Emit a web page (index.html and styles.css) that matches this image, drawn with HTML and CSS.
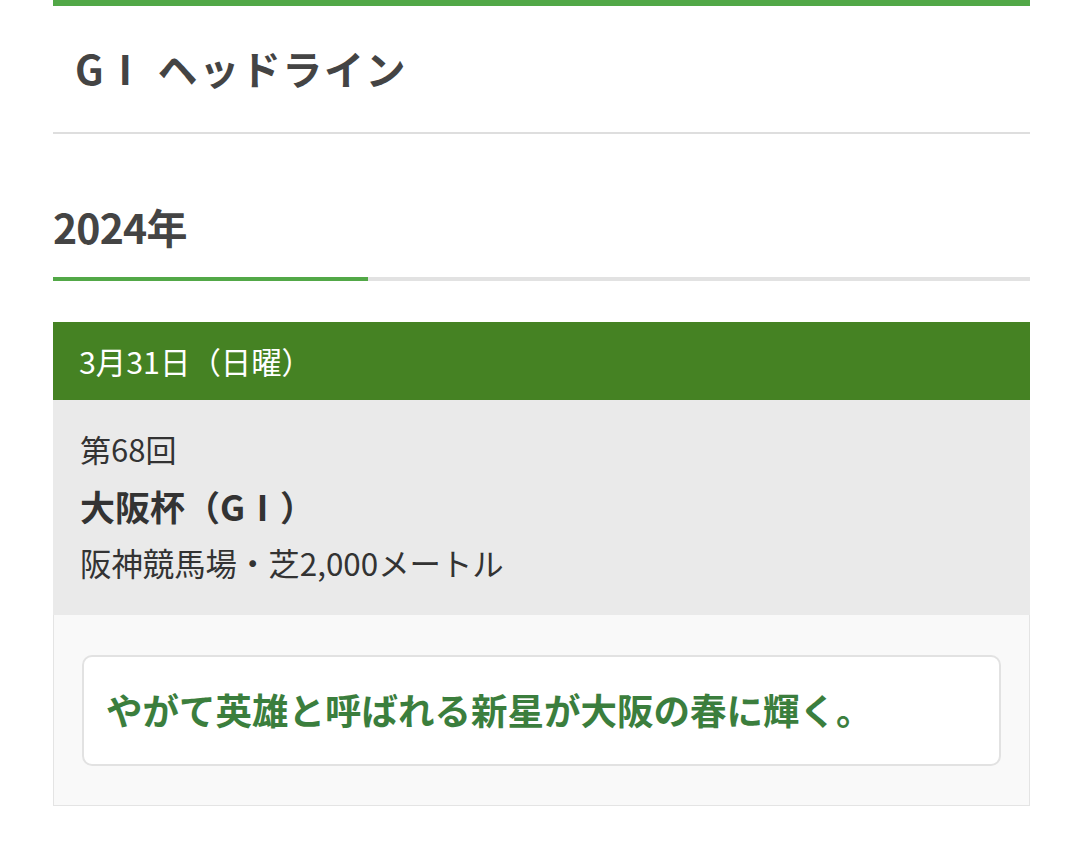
FILE: index.html
```html
<!DOCTYPE html>
<html lang="ja">
<head>
<meta charset="utf-8">
<link rel="stylesheet" href="styles.css">
</head>
<body>
<div class="page">
  <header class="page-head">
    <h1 class="page-title">GⅠ ヘッドライン</h1>
  </header>
  <section class="year">
    <h2 class="year-title">2024年</h2>
    <div class="year-bar"><div class="year-bar-fill"></div></div>
  </section>
  <article class="race">
    <div class="race-date">3月31日（日曜）</div>
    <div class="race-info">
      <p class="race-num">第68回</p>
      <p class="race-name">大阪杯（GⅠ）</p>
      <p class="race-course">阪神競馬場・芝2,000メートル</p>
    </div>
    <div class="race-body">
      <div class="headline">やがて英雄と呼ばれる新星が大阪の春に輝く。</div>
    </div>
  </article>
</div>
</body>
</html>
```
FILE: styles.css
```css
* { box-sizing: border-box; }
html, body { margin: 0; padding: 0; background: #fff; }
body {
  font-family: "Noto Sans CJK JP", "Noto Sans", sans-serif;
  color: #333;
}
.page {
  width: 977px;
  margin: 0 0 0 53px;
}
.page-head {
  border-top: 6px solid #52a847;
  border-bottom: 2px solid #dedede;
  height: 134px;
  padding: 34px 0 0 22px;
}
.page-title {
  margin: 0;
  font-size: 40px;
  font-weight: 700;
  line-height: 56px;
  letter-spacing: 0.04em;
  color: #444;
}
.year {
  padding-top: 64px;
}
.year-title {
  margin: 0;
  font-size: 41px;
  font-weight: 700;
  line-height: 56px;
  color: #444;
  letter-spacing: -0.02em;
}
.year-bar {
  margin-top: 23px;
  height: 4px;
  background: #e2e2e2;
}
.year-bar-fill {
  width: 315px;
  height: 100%;
  background: #52a847;
}
.race {
  margin-top: 41px;
}
.race-date {
  height: 78px;
  background: #458223;
  color: #fff;
  font-size: 30.4px;
  line-height: 78px;
  padding-left: 26px;
}
.race-info {
  background: #eaeaea;
  height: 215px;
  padding: 27px 27px 0;
}
.race-info p { margin: 0; color: #333; }
.race-num { font-size: 31px; line-height: 44px; }
.race-name { font-size: 35px; font-weight: 700; line-height: 70px; }
.race-course { font-size: 31.4px; line-height: 44px; }
.race-body {
  background: #f9f9f9;
  border: 1px solid #e4e4e4;
  border-top: none;
  padding: 40px 28px 39px;
}
.headline {
  background: #fff;
  border: 2px solid #e2e2e2;
  border-radius: 10px;
  height: 111px;
  padding-left: 22px;
  font-size: 36.5px;
  font-weight: 700;
  line-height: 105px;
  color: #3b7e3d;
}
```
